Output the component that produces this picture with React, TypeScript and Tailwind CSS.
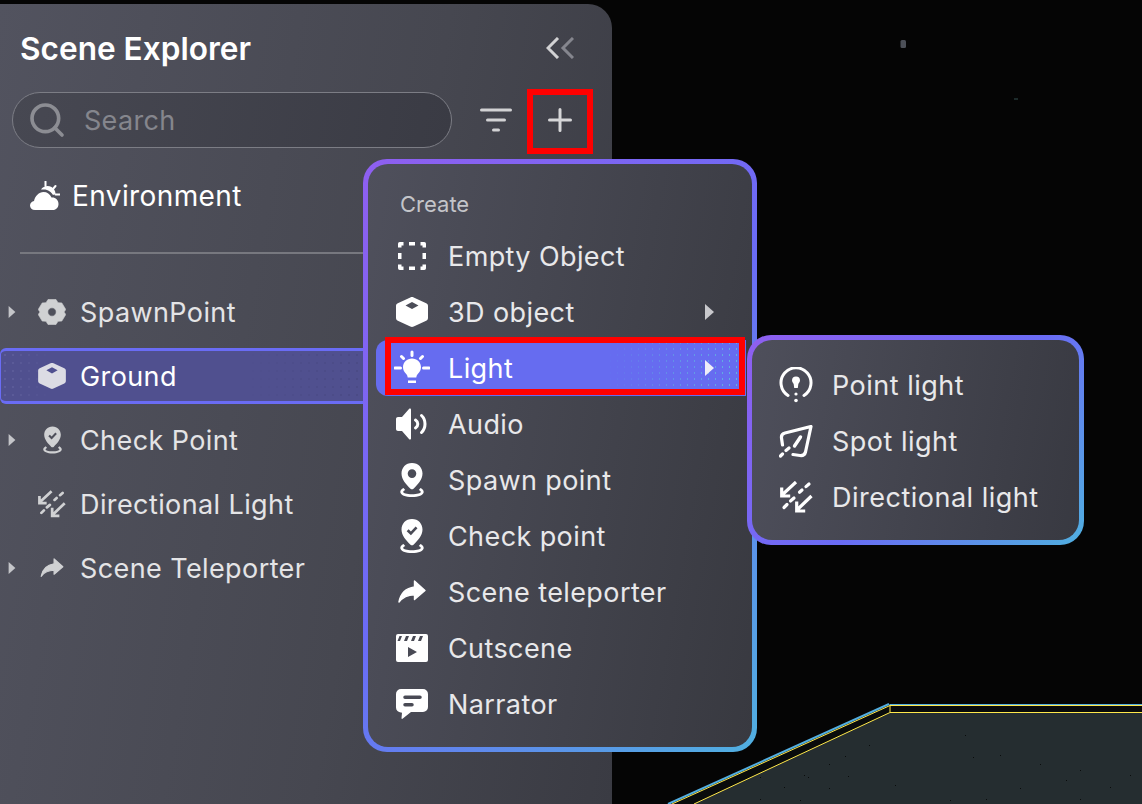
import { ReactNode } from "react";
import { Search } from "lucide-react";

const panelBg = "bg-[linear-gradient(100deg,#52535f_0%,#464750_60%,#3a3b43_100%)]";

// specks scattered over the floor plane
const specks = [
  [965, 735], [869, 745], [845, 756], [829, 764], [808, 777], [804, 775], [848, 776], [895, 785],
  [784, 787], [760, 777], [829, 788], [760, 799], [800, 800], [973, 757], [1000, 755], [1040, 764],
  [1080, 770], [1020, 788], [1066, 780], [1110, 787], [1130, 775], [950, 800], [986, 799], [1080, 799],
];

function Caret({ className }: { className: string }) {
  return (
    <svg viewBox="0 0 9 16" className={className} fill="currentColor">
      <path d="M0 0 L9 8 L0 16 Z" />
    </svg>
  );
}

function CloudSun() {
  return (
    <svg viewBox="0 0 30 30" className="w-[30px] h-[30px]" fill="currentColor">
      <path d="M15.500 .5v4.500M25.500 5l-2.500 3M25.500 13.500h4" stroke="currentColor" strokeWidth="2" strokeLinecap="round" fill="none" />
      <path d="M11 8.500C13 5 18 4 21.500 6 24 7.500 25.500 10 25.500 13L23 14C21.500 11 18 8.500 14 8.500z" />
      <path d="M5 29C2 29 0 27 0 24.500 0 22 2 20.500 4 20 5 15 9 11 13.500 11 17 11 20 13 21.500 16.500 25 16 28.500 18.500 28.500 23 28.500 26.500 26 29 23 29z" />
    </svg>
  );
}

function Gear() {
  return (
    <svg viewBox="0 0 28 28" className="w-7 h-7" fill="currentColor">
      <path
        fillRule="evenodd"
        d="M10 1.500h8l2 3.200 3.800.2 4 6.600-1.800 2.500 1.800 2.500-4 6.600-3.800.2-2 3.200h-8l-2-3.200-3.800-.2-4-6.600L2 14 .2 11.500l4-6.600L8 4.700zM14 9.800a4.200 4.200 0 1 0 0 8.400 4.200 4.200 0 0 0 0-8.400z"
        stroke="currentColor"
        strokeWidth="0.6"
        strokeLinejoin="round"
      />
    </svg>
  );
}

function Cube({ className }: { className: string }) {
  return (
    <svg viewBox="0 0 32 30" className={className} fill="currentColor">
      <path
        fillRule="evenodd"
        d="M16 0c.6 0 1.200.1 1.700.4l12.500 5.800c1.100.5 1.800 1.500 1.800 2.700v12c0 1.200-.7 2.300-1.800 2.800l-12.500 5.800c-1.100.5-2.300.5-3.400 0L1.800 23.700C.7 23.200 0 22.100 0 20.900v-12c0-1.200.7-2.200 1.800-2.700L14.300.4C14.800.1 15.400 0 16 0zM16 5 9.500 8.500 16 12l6.500-3.500z"
      />
    </svg>
  );
}

function Pin({ check, className }: { check?: boolean; className: string }) {
  return (
    <svg viewBox="0 0 24 34" className={className} fill="currentColor">
      {check ? (
        <path
          fillRule="evenodd"
          d="M12 0C5.600 0 1.500 4.800 1.500 10.500c0 6 5 11.500 9 15.200.9.800 2.100.8 3 0 4-3.700 9-9.200 9-15.200C22.500 4.800 18.400 0 12 0zM17.500 9.300l-6.600 7-4.200-4.100 1.900-1.900 2.300 2.200 4.700-5z"
        />
      ) : (
        <path
          fillRule="evenodd"
          d="M12 0C5.600 0 1.500 4.800 1.500 10.500c0 6 5 11.500 9 15.200.9.800 2.100.8 3 0 4-3.700 9-9.200 9-15.200C22.500 4.800 18.400 0 12 0zM12 6.300a4.300 4.300 0 1 1 0 8.600 4.300 4.300 0 0 1 0-8.600z"
        />
      )}
      <path d="M3.500 25C1.500 26 .3 27.300.3 29c0 3 5.200 5 11.700 5s11.700-2 11.700-5c0-1.700-1.200-3-3.200-4l-1.700 2c1.300.6 2 1.300 2 2 0 1-3.500 2.300-8.800 2.300S3.200 30 3.200 29c0-.7.700-1.400 2-2z" />
    </svg>
  );
}

function DirectionalLight({ className }: { className: string }) {
  return (
    <svg viewBox="0 0 33 32" className={className} fill="none" stroke="currentColor" strokeWidth="3.200">
      <path d="M16 1 2 14M1.700 6.500v8.500h8.500M31.500 15 18 28M16.700 20.500v9.500h8.500" />
      <path d="M29 3l-3 2.600M22 9l-2.500 2.200M14 17l-3.500 3M7 23.500 4 26.500" strokeLinecap="round" />
    </svg>
  );
}

function Teleporter({ className }: { className: string }) {
  return (
    <svg viewBox="0 0 28 24" className={className} fill="currentColor">
      <path
        d="M16.500 1 27 10.500 16.500 19.500v-4.800C9.500 14.800 5 16.800 1 22c1.500-8 6.800-13.800 15.500-15z"
        stroke="currentColor"
        strokeWidth="1.400"
        strokeLinejoin="round"
      />
    </svg>
  );
}

function EmptyObject() {
  return (
    <svg viewBox="0 0 28 28" className="w-7 h-7" fill="none" stroke="currentColor" strokeWidth="3.500" strokeLinejoin="round">
      <path d="M1.750 5.500V1.750H5.500M22.500 1.750h3.750V5.500M26.250 22.500v3.750H22.500M5.500 26.250H1.750V22.500" />
      <path d="M11 1.750h6M11 26.250h6M1.750 11v6M26.250 11v6" />
    </svg>
  );
}

function Bulb() {
  return (
    <svg viewBox="0 0 36 36" className="w-9 h-9" fill="currentColor">
      <path d="M18 2v3.500M7.500 6.500 9.500 8.500M28.500 6.500 26.500 8.500M1 18h5.500M29.500 18H35" stroke="currentColor" strokeWidth="3" strokeLinecap="round" fill="none" />
      <path d="M18 8.500c-5 0-9 3.800-9 8.800 0 3 1.400 5 3.200 6.700.9.900 1.300 2 1.500 3.500h8.600c.2-1.500.6-2.600 1.500-3.500 1.800-1.700 3.200-3.700 3.200-6.700 0-5-4-8.800-9-8.800z" />
      <path d="M14 30.500h8v2.500h-8z" />
    </svg>
  );
}

function Audio() {
  return (
    <svg viewBox="0 0 32 32" className="w-8 h-8" fill="currentColor">
      <path d="M14 .5c.6 0 1 .5 1 1v29c0 .6-.4 1-1 1-.3 0-.6-.1-.8-.3L6 23H2c-1.100 0-2-.9-2-2V11c0-1.100.9-2 2-2h4l7.200-8.200c.2-.2.5-.3.8-.3z" />
      <path d="M19.500 12c1.500 1 2.300 2.400 2.300 4s-.8 3-2.300 4M25.500 7.500c2.300 2.200 3.500 5 3.500 8.500s-1.200 6.300-3.500 8.500" fill="none" stroke="currentColor" strokeWidth="3" strokeLinecap="round" />
    </svg>
  );
}

function Clapper() {
  return (
    <svg viewBox="0 0 32 28" className="w-8 h-7" fill="currentColor">
      <path
        fillRule="evenodd"
        d="M2 0h28a2 2 0 0 1 2 2v24a2 2 0 0 1-2 2H2a2 2 0 0 1-2-2V2a2 2 0 0 1 2-2zM3.500 2 1.500 7H4l2-5zM10 2 8 7h3l2-5zM17 2l-2 5h3l2-5zM24 2l-2 5h3l2-5zM12 13v10l9-5z"
      />
    </svg>
  );
}

function Chat() {
  return (
    <svg viewBox="0 0 32 30" className="w-8 h-[30px]" fill="currentColor">
      <path
        fillRule="evenodd"
        d="M5 0h22a5 5 0 0 1 5 5v13a5 5 0 0 1-5 5H15l-8.500 6.800c-.5.300-1 0-1-.5L6 23.800 5 23.500a5 5 0 0 1-5-5V5a5 5 0 0 1 5-5zM9 6.500a1.500 1.500 0 0 0 0 3.500h15a1.700 1.700 0 0 0 0-3.500zM9 14a1.600 1.600 0 0 0 0 3.500h7a1.700 1.700 0 0 0 0-3.500z"
      />
    </svg>
  );
}

function PointLight() {
  return (
    <svg viewBox="0 0 34 36" className="w-[34px] h-9" fill="currentColor">
      <path d="M9 28.500A15 15 0 1 1 25 28.500" fill="none" stroke="currentColor" strokeWidth="3" strokeLinecap="round" />
      <path d="M13 13.500a4 4 0 0 1 8 0c0 1.600-1.300 2.300-1.700 3.800l-.5 3.700h-3.600l-.5-3.700c-.4-1.500-1.700-2.200-1.700-3.800z" />
      <circle cx="17" cy="27" r="1.600" />
      <circle cx="17" cy="33.500" r="1.800" />
    </svg>
  );
}

function SpotLight() {
  return (
    <svg viewBox="0 0 34 33" className="w-[34px] h-[33px]" fill="none" stroke="currentColor" strokeWidth="3.200" strokeLinecap="round" strokeLinejoin="round">
      <path d="M3.500 20 2.500 13Q2 9 6 8L32 1.500 26.500 27Q25.500 31 21 30.500L14 29.500" />
      <path d="M21.500 12 15.500 21" strokeWidth="3.400" />
      <path d="M10 23 7 25.500M3.500 29 1.500 31" />
    </svg>
  );
}

function TreeRow({ label, icon, caret, selected }: { label: string; icon: ReactNode; caret?: boolean; selected?: boolean }) {
  return (
    <div
      className={
        selected
          ? "relative flex items-center h-14 pl-[7px] rounded-l-md border-y-[3px] border-l border-[#6a6cf5] bg-[#50508f] text-white"
          : "flex items-center h-14 pl-2 text-[#e4e4e6]"
      }
    >
      {selected && (
        <>
          <span className="absolute left-0 inset-y-0 w-[50px] bg-[radial-gradient(#8a8ac0_1px,transparent_1.1px)] bg-[length:8px_8px] [mask-image:linear-gradient(to_right,black,transparent)] opacity-25" />
          <span className="absolute left-[240px] right-0 inset-y-0 bg-[radial-gradient(#35355f_1px,transparent_1.1px)] bg-[length:8px_8px] [mask-image:linear-gradient(to_right,transparent,black_60%)] opacity-35" />
        </>
      )}
      <span className="w-2 flex justify-center text-[#c4c5c9]">{caret && <Caret className="w-2 h-3" />}</span>
      <span className={selected ? "relative ml-[22px] w-7 flex justify-center text-[#dcdce4]" : "ml-[22px] w-7 flex justify-center text-[#d0d1d3]"}>{icon}</span>
      <span className="relative ml-[14px] text-[27px] leading-none tracking-[0.4px]">{label}</span>
    </div>
  );
}

function MenuRow({ icon, label, arrow, active, children }: { icon: ReactNode; label: string; arrow?: boolean; active?: boolean; children?: ReactNode }) {
  return (
    <div
      className={
        active
          ? "relative flex items-center h-14 ml-2 mr-[6px] pl-4 pr-8 rounded-l-xl bg-[#666cf0] text-white"
          : "flex items-center h-14 ml-2 mr-[6px] pl-4 pr-8 text-[#e8e8ea]"
      }
    >
      {active && (
        <span className="absolute inset-0 bg-[radial-gradient(#5fd8d8_1px,transparent_1.1px)] bg-[length:7px_6px] [mask-image:linear-gradient(to_right,transparent_62%,black)] opacity-70" />
      )}
      <span className="relative w-10 flex justify-center text-white shrink-0">{icon}</span>
      <span className="relative ml-4 flex-1 text-[27px] leading-none tracking-[0.4px]">{label}</span>
      {arrow && <Caret className={active ? "relative w-[9px] h-4 text-[#eeeef8]" : "w-[9px] h-4 text-[#c8c8cc]"} />}
      {children}
    </div>
  );
}

function LightSubmenu() {
  const rows = [
    { label: "Point light", icon: <PointLight /> },
    { label: "Spot light", icon: <SpotLight /> },
    { label: "Directional light", icon: <DirectionalLight className="w-[33px] h-8" /> },
  ];
  return (
    <div className="absolute left-[371px] -top-[5px] w-[337px] h-[210px] z-10 rounded-3xl p-[5px] bg-[linear-gradient(135deg,#8f5ff0_0%,#6a6cf5_55%,#50b0e0_100%)]">
      <div className="h-full rounded-[20px] pt-[17px] bg-[linear-gradient(100deg,#4e4f5b,#383941)]">
        {rows.map((r) => (
          <div key={r.label} className="flex items-center h-14 pl-[27px] text-[#e8e8ea]">
            <span className="w-[34px] flex justify-center text-white">{r.icon}</span>
            <span className="ml-[19px] text-[27px] leading-none tracking-[0.5px]">{r.label}</span>
          </div>
        ))}
      </div>
    </div>
  );
}

function CreateMenu() {
  return (
    <div className="absolute left-[363px] top-[159px] w-[394px] h-[593px] rounded-3xl p-[5px] bg-[linear-gradient(135deg,#8f5ff0_0%,#6a6cf5_50%,#50b0e0_100%)]">
      <div className="h-full rounded-[20px] pt-4 bg-[linear-gradient(100deg,#4f505c,#383940)]">
        <div className="h-12 flex items-center pl-8 text-[22px] text-[#c4c5c9]">Create</div>
        <MenuRow icon={<EmptyObject />} label="Empty Object" />
        <MenuRow icon={<Cube className="w-8 h-[30px]" />} label="3D object" arrow />
        <MenuRow icon={<Bulb />} label="Light" arrow active>
          <span className="absolute left-[9px] -top-[3px] w-[360px] h-[58px] border-[6px] border-[#ff0000]" />
          <LightSubmenu />
        </MenuRow>
        <MenuRow icon={<Audio />} label="Audio" />
        <MenuRow icon={<Pin className="w-6 h-[34px]" />} label="Spawn point" />
        <MenuRow icon={<Pin check className="w-6 h-[34px]" />} label="Check point" />
        <MenuRow icon={<Teleporter className="w-7 h-6" />} label="Scene teleporter" />
        <MenuRow icon={<Clapper />} label="Cutscene" />
        <MenuRow icon={<Chat />} label="Narrator" />
      </div>
    </div>
  );
}

function SceneBackdrop() {
  return (
    <svg className="absolute inset-0 w-[1142px] h-[804px]" viewBox="0 0 1142 804">
      <rect x="900.500" y="40" width="5.500" height="8" rx="1.500" fill="#4c5058" />
      <rect x="1014" y="98" width="4" height="2" fill="#1c2a2a" />
      <path d="M889 704.500H1142V804H668z" fill="#090b0b" />
      <path d="M890 712.500H1142V804H694z" fill="#252d30" />
      {specks.map(([x, y]) => (
        <rect key={`${x}-${y}`} x={x} y={y} width="1" height="1" fill="#0a0c0c" />
      ))}
      <path d="M1142 704.500H889.500" fill="none" stroke="#52aee0" strokeWidth="1" />
      <path d="M889 704L668 804" fill="none" stroke="#52aee0" strokeWidth="2" />
      <path d="M1142 705.500H890L672 804" fill="none" stroke="#ffe84a" strokeWidth="1" />
      <path d="M1142 712.500H890L694 804M890 705v7" fill="none" stroke="#ffe84a" strokeWidth="1" />
    </svg>
  );
}

export default function App() {
  return (
    <div className="relative w-[1142px] h-[804px] overflow-hidden bg-[#050505] pt-1 font-['Inter',sans-serif]">
      <SceneBackdrop />
      <aside className={`relative w-[612px] h-[800px] rounded-tr-3xl ${panelBg}`}>
        <div className="flex items-center justify-between h-[88px] pl-5 pr-[38px]">
          <h1 className="text-[31.6px] font-semibold text-white leading-none pt-0.5">Scene Explorer</h1>
          <svg viewBox="0 0 28 22" className="w-7 h-[22px]" fill="none" strokeWidth="3">
            <path d="M12 1 2 11l10 10" stroke="#d2d2d4" />
            <path d="M27 1 17 11l10 10" stroke="#85868e" />
          </svg>
        </div>

        <div className="flex items-center h-14 pl-3">
          <label className="flex items-center w-[440px] h-14 pl-[14px] rounded-full border border-[#7c7d85] bg-[linear-gradient(100deg,#474852,#3a3b44)]">
            <Search className="w-10 h-10 text-[#8c8d93]" strokeWidth={2.2} />
            <input placeholder="Search" className="ml-[17px] pt-0.5 flex-1 min-w-0 text-[27px] tracking-[0.3px] outline-none text-white placeholder:text-[#85868d]" />
          </label>
          <svg viewBox="0 0 32 24" className="ml-7 w-8 h-6" fill="none" stroke="#d2d2d4" strokeWidth="3" strokeLinecap="round">
            <path d="M1.500 2h29M7.500 12h17M13.500 22h5" />
          </svg>
          <div className="relative ml-9 w-6 h-6">
            <svg viewBox="0 0 24 24" className="w-6 h-6" fill="none" stroke="#d6d6d8" strokeWidth="3" strokeLinecap="round">
              <path d="M12 1.500v21M1.500 12h21" />
            </svg>
            <span className="absolute -left-[21px] -top-[19px] w-[66px] h-[65px] border-[6px] border-[#ff0000]" />
          </div>
        </div>

        <div className="mt-5 flex items-center h-14 pl-[30px] text-white">
          <CloudSun />
          <span className="ml-3 text-[28px] leading-none tracking-[0.4px]">Environment</span>
        </div>

        <div className="mt-[28px] mx-5 h-0.5 bg-[#77787f]" />

        <div className="mt-[30px] flex flex-col gap-2">
          <TreeRow label="SpawnPoint" icon={<Gear />} caret />
          <TreeRow label="Ground" icon={<Cube className="w-7 h-[26px]" />} selected />
          <TreeRow label="Check Point" icon={<Pin check className="w-[19px] h-7" />} caret />
          <TreeRow label="Directional Light" icon={<DirectionalLight className="w-7 h-7" />} />
          <TreeRow label="Scene Teleporter" icon={<Teleporter className="w-6 h-5" />} caret />
        </div>
      </aside>

      <CreateMenu />
    </div>
  );
}
